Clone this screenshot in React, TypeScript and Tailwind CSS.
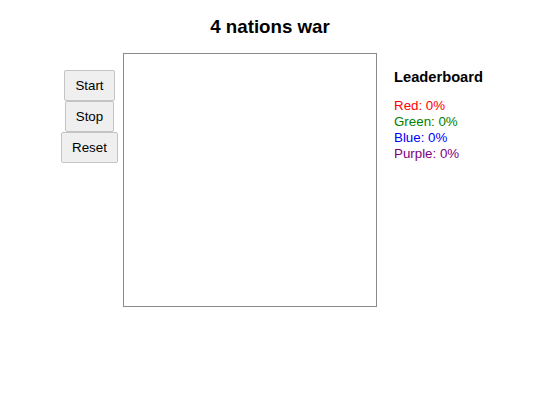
export default function App() {
  const scores = [
    { name: 'Red', color: 'text-[#ff0000]' },
    { name: 'Green', color: 'text-[#008000]' },
    { name: 'Blue', color: 'text-[#0000ff]' },
    { name: 'Purple', color: 'text-[#800080]' },
  ]

  return (
    <div className="w-[540px] h-[405px] bg-white text-black font-['Liberation_Sans',Arial,sans-serif]">
      <h1 className="pt-[16px] text-center text-[18.72px] leading-[22px] font-bold">4 nations war</h1>

      <div className="mt-[15px] flex items-start pl-[61px]">
        {/* controls */}
        <div className="mt-[17px] flex w-[57px] flex-col items-center">
          <button className="rounded-[2px] border border-[#c4c4c4] bg-[#efefef] px-[10px] py-[7px] text-[13.33px] leading-[15px]">
            Start
          </button>
          <button className="rounded-[2px] border border-[#c4c4c4] bg-[#efefef] px-[10px] py-[7px] text-[13.33px] leading-[15px]">
            Stop
          </button>
          <button className="rounded-[2px] border border-[#c4c4c4] bg-[#efefef] px-[10px] py-[7px] text-[13.33px] leading-[15px]">
            Reset
          </button>
        </div>

        {/* board */}
        <div className="ml-[5px] h-[254px] w-[254px] border border-[#8a8a8a] bg-white" />

        {/* leaderboard */}
        <div className="ml-[17px] mt-[15px]">
          <h2 className="text-[14.7px] leading-[18px] font-bold">Leaderboard</h2>
          <ul className="mt-[12px]">
            {scores.map((s) => (
              <li key={s.name} className={`text-[13.33px] leading-[16px] ${s.color}`}>
                {s.name}: 0%
              </li>
            ))}
          </ul>
        </div>
      </div>
    </div>
  )
}
